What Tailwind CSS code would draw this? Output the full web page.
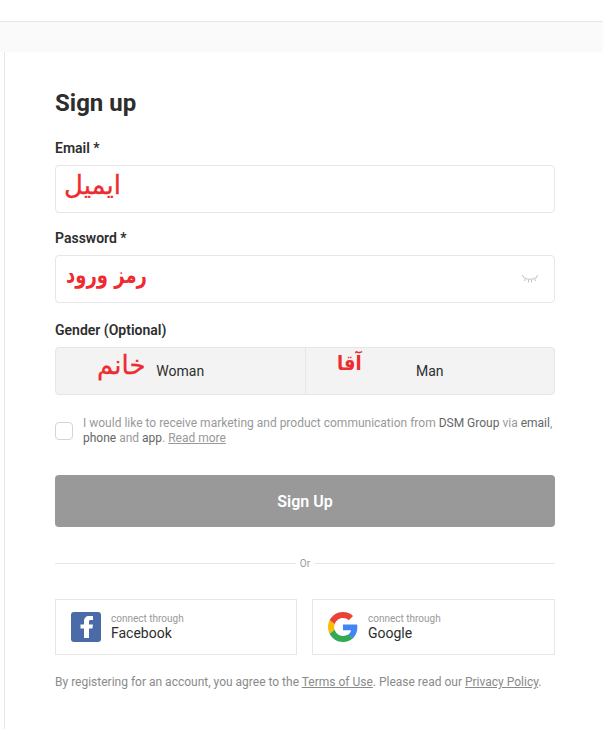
<!DOCTYPE html>
<html lang="en">
<head>
    <meta charset="UTF-8">
    <meta name="viewport" content="width=device-width, initial-scale=1.0">
    <title>Sign up</title>
    <script src="https://cdn.jsdelivr.net/npm/@tailwindcss/browser@4"></script>
</head>
<body class="min-h-screen bg-white font-['Roboto',sans-serif] overflow-hidden">
    <div class="h-[22px] border-b border-[#e6e6e6]"></div>
    <div class="h-[30px] bg-[#fafafa]"></div>

    <main class="ml-[4px] border-l border-[#e6e6e6] pl-[50px] pr-[48px] pt-[36px] h-[677px]">
        <h1 class="text-[24px] leading-[30px] font-bold text-[#2d2d2d] mb-[21px]">Sign up</h1>

        <form>
            <label class="block text-[14px] leading-[18px] font-semibold text-[#2d2d2d] mb-[8px]">Email *</label>
            <div class="h-[48px] border border-[#e6e6e6] rounded-[4px] flex items-center pl-[8px] pb-[9px] mb-[16px]">
                <span dir="rtl" class="text-[26px] leading-none text-[#ee2b30] font-['DejaVu_Sans',sans-serif] [-webkit-text-stroke:0.3px_#ee2b30]">ایمیل</span>
            </div>

            <label class="block text-[14px] leading-[18px] font-semibold text-[#2d2d2d] mb-[8px]">Password *</label>
            <div class="h-[48px] border border-[#e6e6e6] rounded-[4px] flex items-center justify-between pl-[10px] pr-[15px] mb-[18px]">
                <span dir="rtl" class="text-[23px] leading-none font-bold text-[#ee2b30] font-['DejaVu_Sans_Condensed','DejaVu_Sans',sans-serif] origin-left scale-x-[0.87] mb-[7px]">رمز ورود</span>
                <svg class="w-[18px] h-[10px]" viewBox="0 0 18 10" fill="none" stroke="#c4c4c4" stroke-width="1">
                    <path d="M2 3c4 3 10 3 14 0"/>
                    <path d="M1 1l2 2.500M4.500 4.500L3.500 7M7.500 5.500V8.500M10.500 5.500V8.500M13.500 4.500l1 2.500M17 1l-2 2.500"/>
                </svg>
            </div>

            <label class="block text-[14px] leading-[18px] font-semibold text-[#2d2d2d] mb-[8px]">Gender (Optional)</label>
            <div class="relative h-[48px] border border-[#e6e6e6] rounded-[4px] bg-[#f3f3f3] flex text-[14px] text-[#2d2d2d] mb-[21px]">
                <div class="flex-1 flex items-center justify-center border-r border-[#e6e6e6] pt-[1px]">Woman</div>
                <div class="flex-1 flex items-center justify-center pt-[1px]">Man</div>
                <span dir="rtl" class="absolute left-[41px] top-[1px] text-[26px] leading-[32px] text-[#ee2b30] font-['DejaVu_Sans',sans-serif] [-webkit-text-stroke:0.3px_#ee2b30]">خانم</span>
                <span dir="rtl" class="absolute left-[281px] top-[1px] text-[20px] leading-[28px] font-bold text-[#ee2b30] font-['DejaVu_Sans_Condensed','DejaVu_Sans',sans-serif]">آقا</span>
            </div>

            <div class="flex items-center gap-[10px] mb-[29px]">
                <div class="w-[18px] h-[18px] shrink-0 border border-[#d5d5d5] rounded-[4px]"></div>
                <p class="text-[12px] leading-[15px] text-[#999999]">I would like to receive marketing and product communication from <span class="text-[#666666]">DSM Group</span> via <span class="text-[#666666]">email</span>, <span class="text-[#666666]">phone</span> and <span class="text-[#666666]">app</span>. <a class="underline">Read more</a></p>
            </div>

            <button type="button" class="w-full h-[52px] bg-[#999999] rounded-[4px] text-white text-[16px] font-semibold pt-[1px]">Sign Up</button>
        </form>

        <div class="flex items-center gap-[4px] mt-[27px] mb-[27px] h-[18px]">
            <div class="flex-1 border-t border-[#e6e6e6]"></div>
            <span class="text-[10px] text-[#999999]">Or</span>
            <div class="flex-1 border-t border-[#e6e6e6]"></div>
        </div>

        <div class="flex gap-[15px] mb-[19px]">
            <a class="w-[242px] h-[56px] border border-[#e6e6e6] flex items-center gap-[10px] pl-[15px]">
                <svg class="w-[30px] h-[30px]" viewBox="0 0 30 30">
                    <rect width="30" height="30" rx="3" fill="#4a6ba8"/>
                    <path d="M13 26V16.500H9.500v-4H13v-3c0-3.500 2-5.500 5-5.500h4v4h-2.500c-1.200 0-1.500.7-1.500 1.800v2.700h4l-.6 4H18V26z" fill="#ffffff"/>
                </svg>
                <div>
                    <div class="text-[10px] leading-[12px] text-[#999999] mt-[1px] -mb-[1px]">connect through</div>
                    <div class="text-[14px] leading-[18px] text-[#2d2d2d]">Facebook</div>
                </div>
            </a>
            <a class="w-[243px] h-[56px] border border-[#e6e6e6] flex items-center gap-[10px] pl-[15px]">
                <svg class="w-[30px] h-[30px]" viewBox="0 0 48 48">
                    <path fill="#EA4335" d="M24 9.500c3.540 0 6.710 1.220 9.210 3.600l6.850-6.850C35.900 2.380 30.470 0 24 0 14.620 0 6.510 5.380 2.560 13.220l7.980 6.190C12.430 13.720 17.740 9.500 24 9.500z"/>
                    <path fill="#4285F4" d="M46.980 24.550c0-1.570-.15-3.090-.38-4.550H24v9.020h12.940c-.58 2.960-2.260 5.480-4.780 7.180l7.730 6c4.510-4.180 7.090-10.360 7.090-17.650z"/>
                    <path fill="#FBBC05" d="M10.530 28.590c-.48-1.450-.76-2.990-.76-4.590s.27-3.140.76-4.590l-7.980-6.190C.92 16.460 0 20.120 0 24c0 3.880.92 7.540 2.560 10.780l7.970-6.190z"/>
                    <path fill="#34A853" d="M24 48c6.480 0 11.930-2.130 15.890-5.810l-7.730-6c-2.150 1.450-4.920 2.300-8.160 2.300-6.260 0-11.570-4.220-13.470-9.910l-7.980 6.190C6.510 42.620 14.620 48 24 48z"/>
                </svg>
                <div>
                    <div class="text-[10px] leading-[12px] text-[#999999] mt-[1px] -mb-[1px]">connect through</div>
                    <div class="text-[14px] leading-[18px] text-[#2d2d2d]">Google</div>
                </div>
            </a>
        </div>

        <p class="text-[12px] leading-[16px] text-[#8a8a8a]">By registering for an account, you agree to the <a class="underline">Terms of Use</a>. Please read our <a class="underline">Privacy Policy</a>.</p>
    </main>
</body>
</html>
